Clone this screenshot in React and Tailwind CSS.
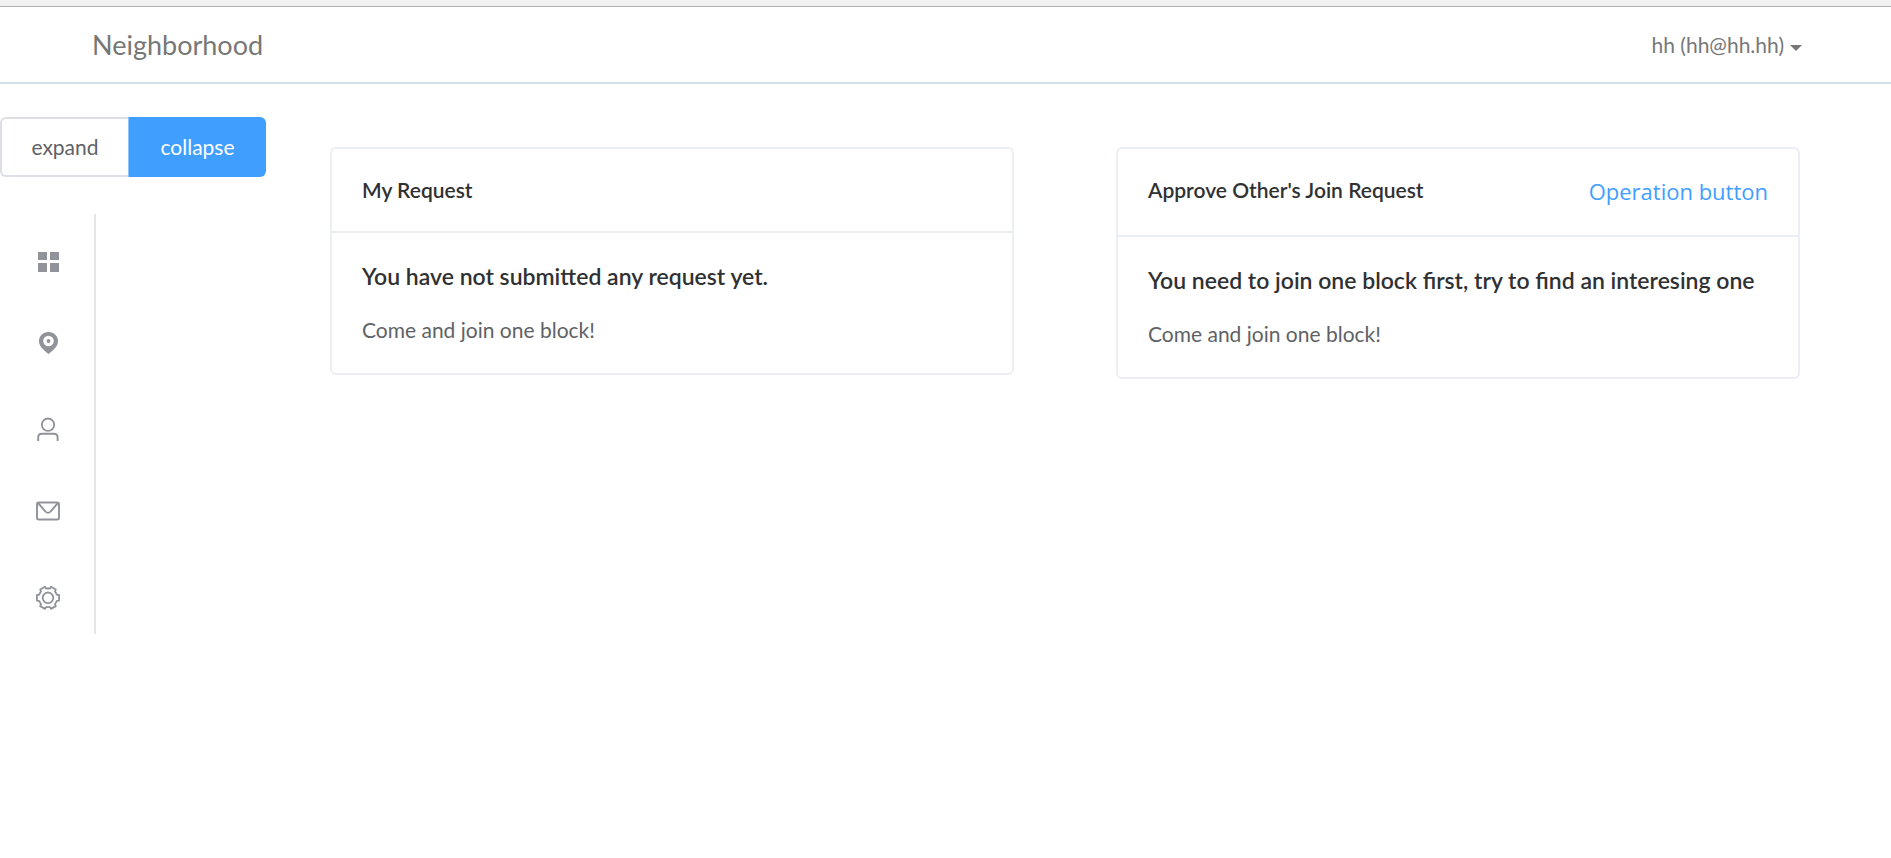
const ITEMS = [
  { label: 'Blocks', Icon: GridIcon },
  { label: 'Map', Icon: PinIcon },
  { label: 'Profile', Icon: UserIcon },
  { label: 'Messages', Icon: MailIcon },
  { label: 'Settings', Icon: GearIcon },
]

function GridIcon() {
  return (
    <svg viewBox="-1 -10 28 36" className="h-9 w-7 fill-current" aria-hidden="true">
      <path d="M4 4h9v8H4zM16 4h9v8h-9zM4 15h9v9H4zM16 15h9v9h-9z" />
    </svg>
  )
}

function PinIcon() {
  return (
    <svg viewBox="-1 -7 28 36" className="h-9 w-7 fill-current" aria-hidden="true">
      <path
        fillRule="evenodd"
        d="M14.500 3C9 3 5 7 5 12c0 5.500 4.500 9 9.500 13 5-4 9.500-7.500 9.500-13 0-5-4-9-9.500-9zm0 3.700a5.300 5.300 0 1 1 0 10.600 5.300 5.300 0 0 1 0-10.600z"
      />
      <circle cx="14.500" cy="12" r="1.900" />
    </svg>
  )
}

function UserIcon() {
  return (
    <svg viewBox="-1 -8 28 36" className="h-9 w-7 fill-none stroke-current" strokeWidth="1.900" aria-hidden="true">
      <circle cx="14" cy="10.700" r="6.200" />
      <path d="M4.200 27v-3.500c0-2.200 1.500-3.700 3.700-3.700h12c2.200 0 3.700 1.500 3.700 3.700V27" />
    </svg>
  )
}

function MailIcon() {
  return (
    <svg viewBox="-1 -5 28 36" className="h-9 w-7 fill-none stroke-current" strokeWidth="1.900" aria-hidden="true">
      <rect x="3" y="7.500" width="22" height="17" rx="1.800" />
      <path d="M4 8l7.500 8.500c1.500 1.800 3.500 1.800 5 0L24 8" />
    </svg>
  )
}

function GearIcon() {
  return (
    <svg viewBox="0 -8 28 36" className="h-9 w-7 fill-none stroke-current" strokeWidth="1.800" strokeLinejoin="round" aria-hidden="true">
      <path d="M13 6.500H17L18 4.700L22.800 7.500L22 9.500L24 12.800L26.100 13V18.600L24 18.800L22 22.100L22.800 24.100L18 26.900L17 25.100H13L12 26.900L7.200 24.100L8 22.100L6 18.800L3.900 18.600V13L6 12.800L8 9.500L7.200 7.500L12 4.700Z" />
      <circle cx="15" cy="15.800" r="5.300" />
    </svg>
  )
}

function Card({ title, action, heading, text }) {
  return (
    <section className="rounded-md border-2 border-[#ebeef5] bg-white">
      <header className="flex items-start justify-between border-b-2 border-[#ebeef5] px-[30px] py-[27px]">
        <h2 className="text-[21px] leading-7 font-semibold text-[#303133]">{title}</h2>
        {action}
      </header>
      <div className="p-[30px]">
        <h3 className="mb-[27px] text-[23px] leading-[26px] font-semibold text-[#303133]">{heading}</h3>
        <p className="text-[21px] leading-[27px] text-[#606266]">{text}</p>
      </div>
    </section>
  )
}

export default function App() {
  return (
    <div className="min-h-screen bg-white font-['Lato',sans-serif] text-[21px]">
      <div className="h-[7px] border-b border-[#b0b0b0] bg-[#f1f1f1]" />
      <header className="flex h-[77px] items-center justify-between border-b-2 border-[#d3e0e9] pr-[89px] pl-[92px] text-[#777]">
        <a href="#" className="text-[27px] leading-8">Neighborhood</a>
        <button type="button" className="flex items-center gap-1.5 leading-8">
          hh (hh@hh.hh)
          <svg viewBox="0 0 12 6" className="mt-1.5 h-[6px] w-3 fill-current" aria-hidden="true">
            <path d="M0 0h12L6 6z" />
          </svg>
        </button>
      </header>
      <div className="flex items-start pt-[33px] pr-[91px]">
        <div className="w-[330px] shrink-0">
          <div className="flex h-[60px] leading-7" role="group" aria-label="Menu size">
            <button type="button" className="w-32 rounded-l-md border-2 border-r-0 border-[#dcdfe6] text-[#606266]">expand</button>
            <button type="button" className="w-[138px] rounded-r-md border-l border-[#8cc5ff] bg-[#409eff] text-white">collapse</button>
          </div>
          <nav className="mt-[37px] w-24 border-r-2 border-[#e6e6e6] text-[#909399]">
            {ITEMS.map(({ label, Icon }) => (
              <a key={label} href="#" aria-label={label} className="flex h-[84px] items-center justify-center">
                <Icon />
              </a>
            ))}
          </nav>
        </div>
        <main className="mt-[30px] grid grow grid-cols-2 items-start gap-[102px]">
          <Card
            title="My Request"
            heading="You have not submitted any request yet."
            text="Come and join one block!"
          />
          <Card
            title="Approve Other's Join Request"
            action={
              <button type="button" className="mb-0.5 font-['Open_Sans',sans-serif] text-[22px] leading-[30px] text-[#409eff]">
                Operation button
              </button>
            }
            heading="You need to join one block first, try to find an interesing one"
            text="Come and join one block!"
          />
        </main>
      </div>
    </div>
  )
}
